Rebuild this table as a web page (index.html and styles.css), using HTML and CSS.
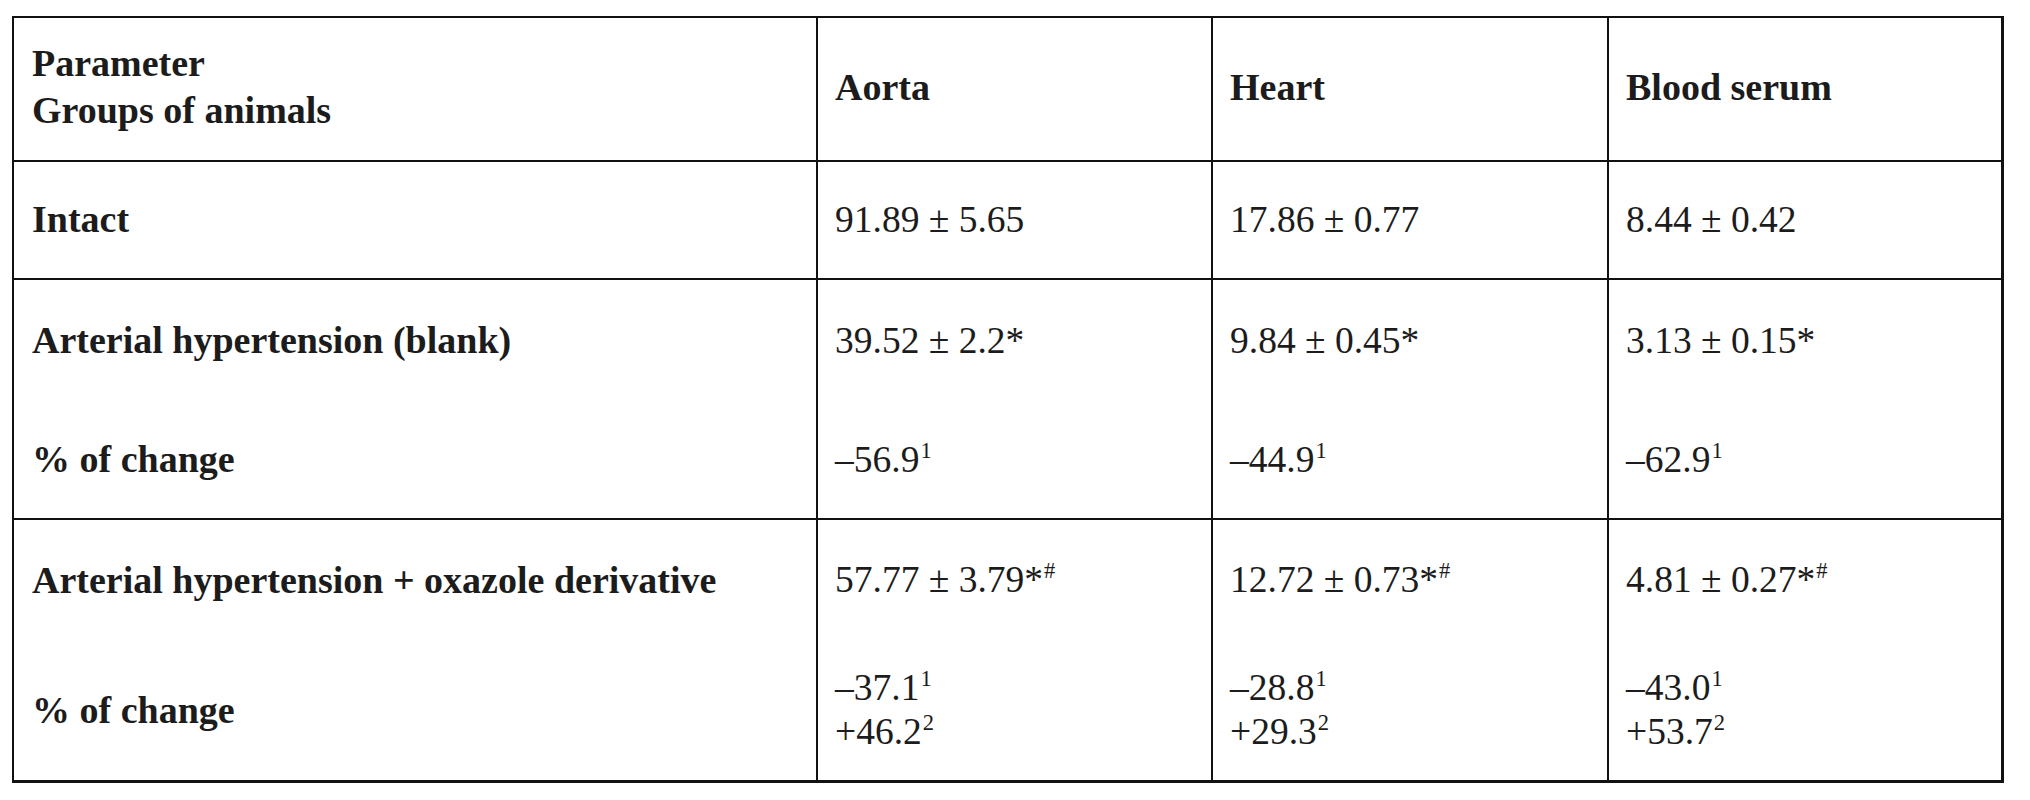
FILE: index.html
```html
<!DOCTYPE html>
<html lang="en">
<head>
<meta charset="utf-8">
<title>Table</title>
<link rel="stylesheet" href="styles.css">
</head>
<body>
<div class="table">
  <div class="cell head label">
    <div>Parameter</div>
    <div>Groups of animals</div>
  </div>
  <div class="cell head label"><div>Aorta</div></div>
  <div class="cell head label"><div>Heart</div></div>
  <div class="cell head label"><div>Blood serum</div></div>

  <div class="cell single label"><div>Intact</div></div>
  <div class="cell single"><div>91.89 ± 5.65</div></div>
  <div class="cell single"><div>17.86 ± 0.77</div></div>
  <div class="cell single"><div>8.44 ± 0.42</div></div>

  <div class="cell r3 label">
    <div class="l1">Arterial hypertension (blank)</div>
    <div class="l2">% of change</div>
  </div>
  <div class="cell r3">
    <div class="l1">39.52 ± 2.2*</div>
    <div class="l2">–56.9<sup>1</sup></div>
  </div>
  <div class="cell r3">
    <div class="l1">9.84 ± 0.45*</div>
    <div class="l2">–44.9<sup>1</sup></div>
  </div>
  <div class="cell r3">
    <div class="l1">3.13 ± 0.15*</div>
    <div class="l2">–62.9<sup>1</sup></div>
  </div>

  <div class="cell r4 label last">
    <div class="l1">Arterial hypertension + oxazole derivative</div>
    <div class="l2 mid">% of change</div>
  </div>
  <div class="cell r4 last">
    <div class="l1">57.77 ± 3.79*<sup>#</sup></div>
    <div class="l2">
      <div>–37.1<sup>1</sup></div>
      <div>+46.2<sup>2</sup></div>
    </div>
  </div>
  <div class="cell r4 last">
    <div class="l1">12.72 ± 0.73*<sup>#</sup></div>
    <div class="l2">
      <div>–28.8<sup>1</sup></div>
      <div>+29.3<sup>2</sup></div>
    </div>
  </div>
  <div class="cell r4 last">
    <div class="l1">4.81 ± 0.27*<sup>#</sup></div>
    <div class="l2">
      <div>–43.0<sup>1</sup></div>
      <div>+53.7<sup>2</sup></div>
    </div>
  </div>
</div>
</body>
</html>
```

FILE: styles.css
```css
html, body {
  margin: 0;
  padding: 0;
  background: #ffffff;
}

body {
  font-family: "Liberation Serif", "Times New Roman", serif;
  font-size: 37.5px;
  color: #1c1c1c;
}

.table {
  display: grid;
  grid-template-columns: 804px 395px 396px 395px;
  grid-template-rows: 144px 118px 240px 263px;
  width: 1990px;
  margin: 16px 0 0 12px;
  border-left: 2px solid #111;
  border-top: 2px solid #111;
  box-sizing: content-box;
}

.cell {
  box-sizing: border-box;
  border-right: 2px solid #111;
  border-bottom: 2px solid #111;
  padding-left: 17px;
  display: flex;
  flex-direction: column;
}

.cell.label:nth-child(4n+1) {
  padding-left: 18px;
}

.cell:nth-child(4n) {
  border-right-width: 3px;
}

.label {
  font-weight: bold;
  font-size: 38px;
}

.head {
  justify-content: center;
  line-height: 47px;
  padding-bottom: 4px;
}

.single {
  justify-content: center;
  line-height: 47px;
  padding-bottom: 2px;
}

.r3 {
  justify-content: flex-start;
  padding-top: 37px;
  line-height: 47px;
}

.r3 .l2 {
  margin-top: 72px;
}

.r4 {
  justify-content: flex-start;
  padding-top: 38px;
  line-height: 44px;
}

.r4 .l2 {
  margin-top: 64px;
}

.r4 .l2.mid {
  line-height: 88px;
}

.last {
  border-bottom: 3px solid #111;
}

sup {
  font-size: 0.6em;
  line-height: 0;
  vertical-align: 0.62em;
  margin-left: 1px;
}
```
